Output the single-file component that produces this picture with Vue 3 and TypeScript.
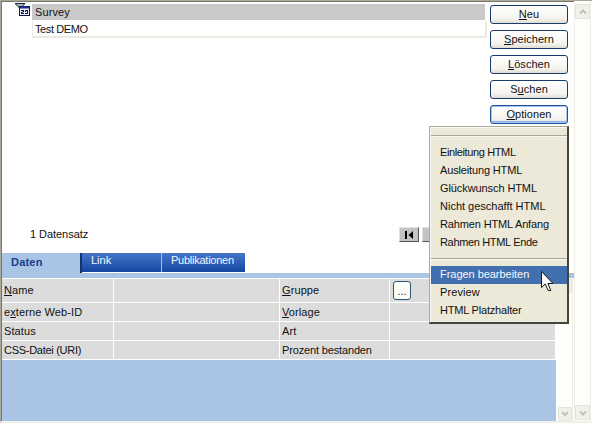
<script setup lang="ts">
interface Label { pre: string; key: string; post: string; tracking?: number }
interface Item { text: string; tracking: number }

const buttons: (Label & { active?: boolean })[] = [
  { pre: '', key: 'N', post: 'eu' },
  { pre: '', key: 'S', post: 'peichern' },
  { pre: '', key: 'L', post: 'öschen' },
  { pre: 'S', key: 'u', post: 'chen' },
  { pre: '', key: 'O', post: 'ptionen', active: true },
]

const records: Item[] = [
  { text: 'Survey', tracking: 0.1 },
  { text: 'Test DEMO', tracking: -0.4 },
]

const rows: { left: Label; right: Label; picker?: boolean }[] = [
  { left: { pre: '', key: 'N', post: 'ame' }, right: { pre: '', key: 'G', post: 'ruppe' }, picker: true },
  { left: { pre: 'e', key: 'x', post: 'terne Web-ID' }, right: { pre: '', key: 'V', post: 'orlage' } },
  { left: { pre: 'Status', key: '', post: '' }, right: { pre: 'Art', key: '', post: '' } },
  {
    left: { pre: 'CSS-Datei (URI)', key: '', post: '', tracking: -0.28 },
    right: { pre: 'Prozent bestanden', key: '', post: '', tracking: -0.15 },
  },
]

const htmlItems: Item[] = [
  { text: 'Einleitung HTML', tracking: -0.38 },
  { text: 'Ausleitung HTML', tracking: -0.15 },
  { text: 'Glückwunsch HTML', tracking: -0.09 },
  { text: 'Nicht geschafft HTML', tracking: 0 },
  { text: 'Rahmen HTML Anfang', tracking: -0.14 },
  { text: 'Rahmen HTML Ende', tracking: -0.34 },
]
const surveyItems: Item[] = [
  { text: 'Fragen bearbeiten', tracking: -0.04 },
  { text: 'Preview', tracking: 0.1 },
  { text: 'HTML Platzhalter', tracking: -0.2 },
]
const selected = 'Fragen bearbeiten'

const spacing = (t = 0.1) => ({ letterSpacing: `${t}px` })
</script>

<template>
  <div class="window">
    <main class="content">
      <section class="top">
        <div class="gutter">
          <svg class="filter" width="16" height="15" viewBox="0 0 16 15">
            <path d="M0 .5h10L6.500 4v6H4.500V5z" fill="#a9b8ba" stroke="#17243b" />
            <rect x="4.500" y="3.500" width="10" height="9" fill="#eef2ff" stroke="#10154b" />
            <path d="M5 4.500h9" stroke="#222c8c" stroke-width="2" />
            <path d="M6 7.500h3M6 10.500h3M10 7.500h3M10 10.500h3M8.500 7v2M6.500 9v2M10.500 7v2M12.500 7v4M7 9h1.500" stroke="#10154b" />
          </svg>
        </div>
        <div class="records">
          <div v-for="(r, i) in records" :key="r.text" class="record" :class="{ current: i === 0 }" :style="spacing(r.tracking)">{{ r.text }}</div>
        </div>
        <div class="buttons">
          <button v-for="b in buttons" :key="b.key" class="btn" :class="{ active: b.active }">
            <span>{{ b.pre }}<u>{{ b.key }}</u>{{ b.post }}</span>
          </button>
        </div>
      </section>

      <div class="status">
        <span class="count">1 Datensatz</span>
        <div class="nav">
          <i class="navbtn">
            <svg width="9" height="8" viewBox="0 0 9 8"><path d="M0 0h2v8H0zM8 0v8L3.500 4z" /></svg>
          </i>
          <i class="navbtn"></i>
        </div>
      </div>

      <nav class="tabs">
        <span class="tab on">Daten</span>
        <span class="tab link">Link</span>
        <span class="tab pub">Publikationen</span>
      </nav>
      <div class="strip"></div>
      <div class="lower">
        <div class="pane">
          <div class="form">
            <template v-for="row in rows" :key="row.left.post + row.left.pre">
              <label class="cell" :style="spacing(row.left.tracking)">{{ row.left.pre }}<u>{{ row.left.key }}</u>{{ row.left.post }}</label>
              <div class="cell"></div>
              <label class="cell" :style="spacing(row.right.tracking)">{{ row.right.pre }}<u>{{ row.right.key }}</u>{{ row.right.post }}</label>
              <div class="cell"><button v-if="row.picker" class="picker">...</button></div>
            </template>
          </div>
        </div>
        <div class="innerbar">
          <i class="arrow inner"><svg width="8" height="6" viewBox="0 0 8 6"><path d="M1 4l3-3 3 3" /></svg></i>
          <i class="arrow inner"><svg width="8" height="6" viewBox="0 0 8 6"><path d="M1 1l3 3 3-3" /></svg></i>
        </div>
      </div>
    </main>
    <aside class="outerbar">
      <i class="arrow"><svg width="8" height="6" viewBox="0 0 8 6"><path d="M1 4.500l3-3 3 3" /></svg></i>
      <i class="arrow"><svg width="8" height="6" viewBox="0 0 8 6"><path d="M1 1.500l3 3 3-3" /></svg></i>
    </aside>

    <div class="menu">
      <hr class="first">
      <div v-for="m in htmlItems" :key="m.text" class="item" :style="spacing(m.tracking)">{{ m.text }}</div>
      <hr class="second">
      <div v-for="m in surveyItems" :key="m.text" class="item" :class="{ hot: m.text === selected }" :style="spacing(m.tracking)">{{ m.text }}</div>
    </div>
    <svg class="cursor" width="13" height="21" viewBox="0 0 13 21">
      <path d="M.5 .5v16l3.700-3.500 3 6.500h2.600l-2.900-7H12z" fill="#fff" stroke="#10131c" />
    </svg>
  </div>
</template>

<style>
body { background: #fffffb; overflow: hidden; }
</style>

<style scoped>
* { box-sizing: border-box; }
.window {
  position: relative;
  display: flex;
  width: 592px;
  height: 423px;
  border-top: 1px solid #aaa99a;
  border-left: 1px solid #aaa99a;
  border-bottom: 2px solid #f2f1e8;
  background: #fff;
  color: #111;
  font: 11px/13px "Liberation Sans", Arial, sans-serif;
}
.content {
  width: 573px;
  height: 420px;
  border-top: 1px solid #77766b;
  border-left: 1px solid #77766b;
  display: flex;
  flex-direction: column;
}
u { text-underline-offset: 1px; text-decoration-thickness: 1px; }
.top { display: flex; height: 223px; }
.gutter { width: 30px; padding: 1px 0 0 13px; }
.filter { display: block; }
.records { width: 455px; padding-top: 2px; margin-right: 3px; }
.record {
  height: 17px;
  padding: 2px 2px 0;
  border: solid #ebe9e0;
  border-width: 0 2px 2px 1px;
}
.record.current {
  height: 16px;
  margin: 0 2px 1px 0;
  background: #c9c9c9;
  border-width: 0;
  padding-left: 3px;
}
.buttons { display: flex; flex-direction: column; gap: 6px; padding-top: 3px; }
.btn {
  display: flex;
  justify-content: center;
  align-items: center;
  width: 78px;
  height: 19px;
  padding: 0;
  border: 1px solid #173c6b;
  border-radius: 3px;
  background: linear-gradient(#fff, #f4f3ee 75%, #dfddd2);
  color: #111;
  font: inherit;
  letter-spacing: .05px;
}
.btn.active { box-shadow: inset 0 0 0 1px #a5c4f3, inset 0 -2px #8fb2ea; border-color: #235091; }
.status { display: flex; height: 28px; padding-left: 28px; }
.count { width: 369px; padding-top: 3px; letter-spacing: -.05px; }
.nav { display: flex; gap: 3px; padding-top: 2px; }
.navbtn {
  width: 20px;
  height: 15px;
  display: flex;
  align-items: center;
  justify-content: center;
  background: #c3c3c3;
  border: 1px solid;
  border-color: #e0e0e0 #555 #555 #e0e0e0;
}
.tabs { display: flex; height: 20px; color: #f2f6ff; }
.tab {
  height: 19px;
  padding: 1px 9px 0;
  background: linear-gradient(#4777c9, #1445a1);
}
.tab.on {
  width: 80px;
  height: 20px;
  padding: 3px 9px 0;
  background: #aac4e6;
  border-right: 2px solid #16336c;
  color: #153f8a;
  font-weight: bold;
  letter-spacing: .2px;
}
.tab.link { width: 80px; border-right: 1px solid #a9c0e8; }
.tab.pub { width: 83px; letter-spacing: -.25px; }
.strip { height: 5px; background: #aac4e6; flex: none; }
.lower { display: flex; flex: 1; }
.pane { width: 554px; background: #aac4e6; }
.form {
  display: grid;
  grid-template-columns: 111px 165px 109px 165px;
  grid-template-rows: 23px 18px 18px 18px;
  gap: 1px;
  padding: 1px 1px 1px 0;
  background: #fff;
}
.cell { background: #dcdcdc; padding: 3px 2px 0; white-space: nowrap; }
.cell:nth-child(-n+4) { padding-top: 5px; }
.cell:nth-child(4) { padding: 2px 3px; }
.picker {
  display: block;
  width: 18px;
  height: 19px;
  padding: 0;
  border: 1px solid #315577;
  border-radius: 3px;
  background: #fbfbf8;
  color: #333;
  font: 11px/12px "Liberation Sans", Arial, sans-serif;
}
.innerbar, .outerbar {
  display: flex;
  flex-direction: column;
  justify-content: space-between;
  align-items: center;
  background: #fefefb;
}
.innerbar { width: 17px; border-left: 1px solid #fff; border-right: 1px solid #f1f0e8; padding: 1px 0 0; }
.outerbar { width: 17px; height: 420px; border: solid #eeede5; border-width: 0 1px; padding: 3px 0 1px; }
.arrow {
  width: 15px;
  height: 15px;
  display: flex;
  align-items: center;
  justify-content: center;
  background: #f1f0ea;
  border: 1px solid #e4e3dc;
  border-radius: 1px;
}
.arrow.inner { width: 14px; height: 14px; }
.arrow path { fill: none; stroke: #c1c0b9; stroke-width: 2; }
.menu {
  position: absolute;
  left: 428px;
  top: 125px;
  width: 140px;
  height: 198px;
  background: #ece9d8;
  border: solid #aaa89d;
  border-width: 1px 2px 2px 1px;
  border-right-color: #45443f;
  border-bottom-color: #45443f;
  box-shadow: inset 1px 1px #faf9f1;
}
hr { height: 2px; margin: 0 0 0 1px; border: 0; border-top: 1px solid #aaa899; background: #faf9f0; }
hr.first { margin-top: 8px; margin-bottom: 7px; }
hr.second { margin-top: 6px; margin-bottom: 6px; }
.item { height: 18px; margin-left: 1px; padding: 2px 0 0 9px; white-space: nowrap; }
.item.hot { background: #426fae; color: #f5f8ff; }
.cursor { position: absolute; left: 540px; top: 270px; }
</style>
